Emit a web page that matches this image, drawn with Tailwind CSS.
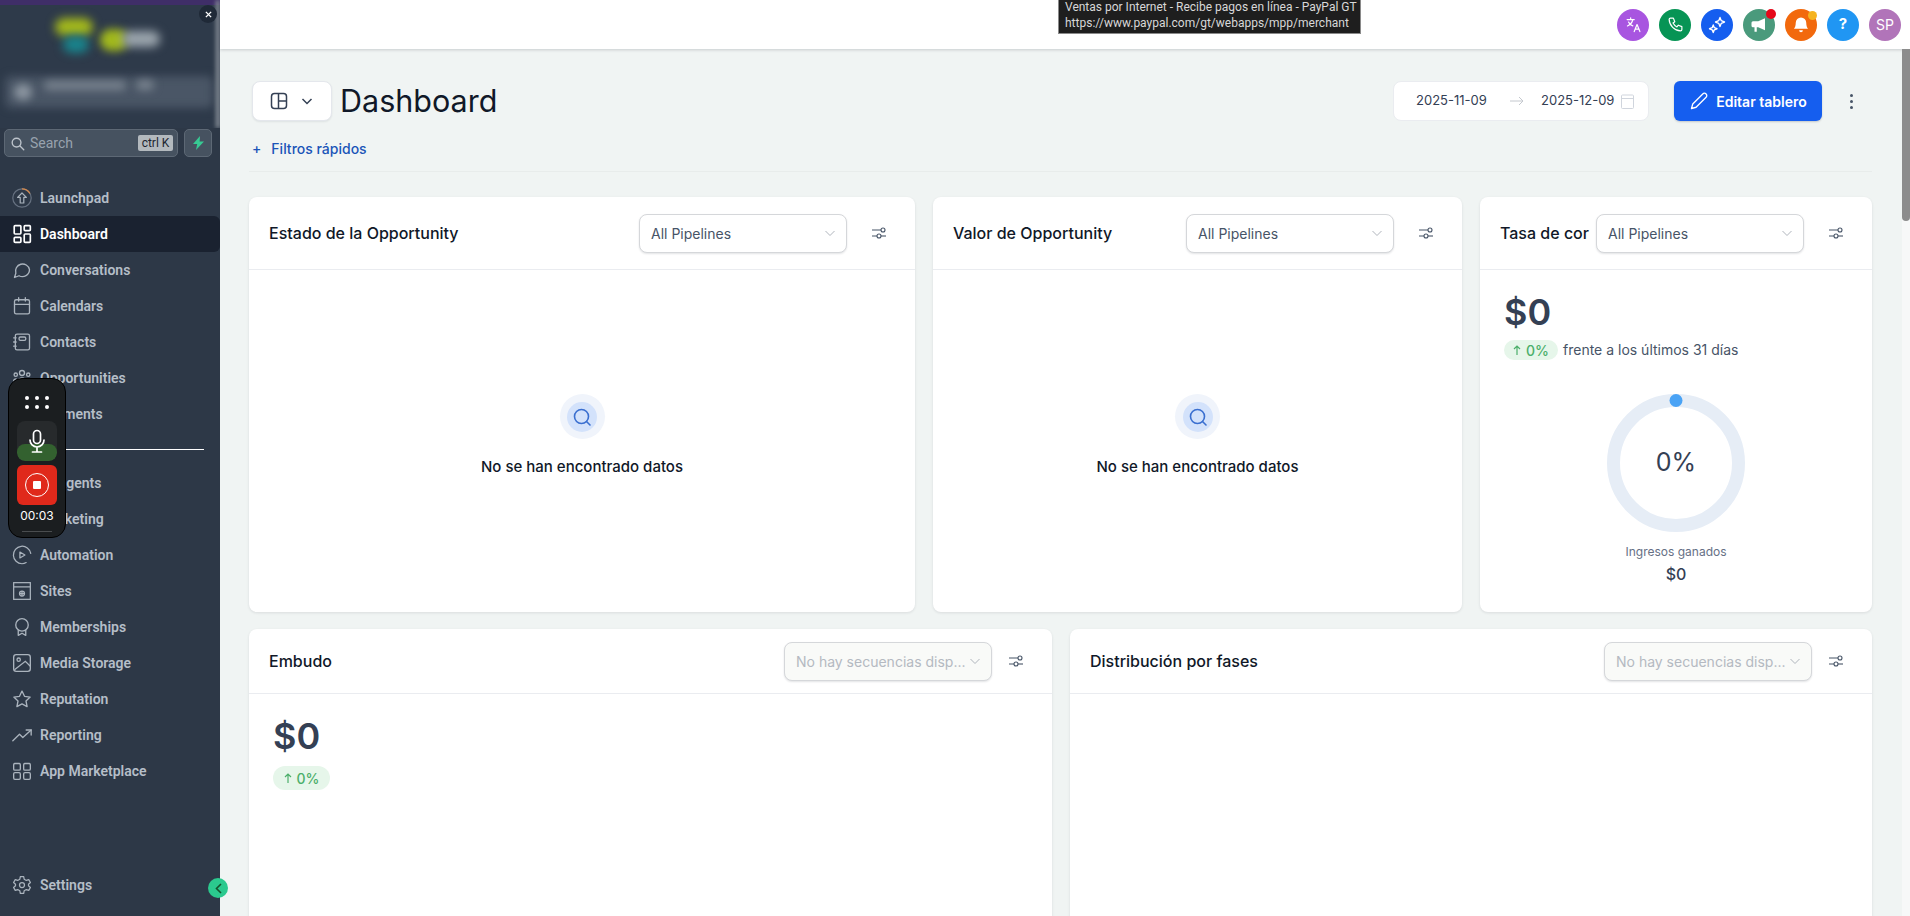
<!DOCTYPE html>
<html lang="es">
<head>
  <meta charset="UTF-8" />
  <title>Dashboard</title>
  <script src="https://cdn.jsdelivr.net/npm/@tailwindcss/browser@4"></script>
</head>
<body class="h-[916px] w-[1910px] overflow-hidden flex bg-[#f0f4f3] font-['Inter',sans-serif] text-[#101828]">

  <!-- sidebar -->
  <aside class="relative w-[220px] h-full shrink-0 flex flex-col bg-[#2d3847] font-['Roboto',sans-serif]">
    <div class="relative h-[128px] overflow-hidden bg-[#2e3a4a]">
      <div class="absolute inset-x-0 top-0 h-[5px] bg-[#3f2e68]"></div>
      <div class="absolute left-[55px] top-[18px] w-[38px] h-[18px] rounded-full bg-[#a3b81c] blur-[5px]"></div>
      <div class="absolute left-[63px] top-[36px] w-[26px] h-[17px] rounded-full bg-[#19838c] blur-[5px]"></div>
      <div class="absolute left-[100px] top-[29px] w-[28px] h-[22px] rounded-full bg-[#a2b91d] blur-[4px]"></div>
      <div class="absolute left-[122px] top-[31px] w-[38px] h-[16px] rounded-full bg-[#9ba5ad] blur-[5px]"></div>
      <div class="absolute left-[5px] top-[76px] w-[208px] h-[32px] rounded-md bg-[#4a5666] blur-[4px]"></div>
      <div class="absolute left-[14px] top-[84px] w-[18px] h-[16px] rounded-full bg-[#8b95a0] blur-[4px]"></div>
      <div class="absolute left-[44px] top-[81px] w-[82px] h-[9px] rounded-full bg-[#79838f] blur-[4px]"></div>
      <div class="absolute left-[136px] top-[80px] w-[18px] h-[10px] rounded-full bg-[#79838f] blur-[4px]"></div>
      <div class="absolute right-0 top-0 w-[4px] h-[128px] bg-[#8b939c] blur-[2px]"></div>
      <div class="absolute left-[199px] top-[5px] w-[18px] h-[18px] rounded-full bg-[#1f2937] flex items-center justify-center">
        <svg class="w-[7px] h-[7px]" viewBox="0 0 8 8" fill="none" stroke="#fff" stroke-width="1.6"><path d="M1 1l6 6M7 1L1 7"/></svg>
      </div>
    </div>

    <div class="flex gap-[6px] pl-[4px] pr-[8px] pt-[1px] h-[29px] box-content">
      <div class="flex-1 h-[28px] rounded-[5px] border border-[#5d6875] bg-[#465260] flex items-center pl-[5px] pr-[4px]">
        <svg class="w-[15px] h-[15px] shrink-0" viewBox="0 0 24 24" fill="none" stroke="#bcc3cb" stroke-width="2.2"><circle cx="10.5" cy="10.5" r="7"/><path d="M16 16l6 6" stroke-linecap="round"/></svg>
        <span class="ml-[5px] flex-1 text-[14px] text-[#98a2ae]">Search</span>
        <span class="h-[16px] w-[35px] rounded-[2px] bg-[#b3b9be] text-[#1d2631] text-[12px] leading-[16px] text-center">ctrl K</span>
      </div>
      <div class="w-[28px] h-[28px] rounded-[5px] border border-[#5d6875] bg-[#465260] flex items-center justify-center">
        <svg class="w-[13px] h-[14px]" viewBox="0 0 13 14" fill="#37ca93"><path d="M8 0L1 8h4.2L4 14l8-8.4H7.6z"/></svg>
      </div>
    </div>

    <nav class="pt-[22px] flex-1 flex flex-col text-[14px] font-semibold text-[#b5bec8]">
      <a class="h-9 flex items-center pl-[12px] gap-[8px] pr-2">
        <svg class="w-5 h-5 shrink-0" viewBox="0 0 20 20" fill="none" stroke="#aab3bd" stroke-width="1.2"><circle cx="10" cy="10" r="9.2" stroke="#667180"/><path d="M10 .8a9.2 9.2 0 0 1 8 4.7" stroke="#d98a4b"/><path d="M10 5l4.4 4.4h-2.6V15H8.2V9.4H5.6z" stroke-linejoin="round"/></svg>
        <span>Launchpad</span>
      </a>
      <a class="h-9 flex items-center pl-[12px] gap-[8px] pr-2 bg-[#1a2230] rounded-r-[6px] text-white">
        <svg class="w-5 h-5 shrink-0" viewBox="0 0 18 18" fill="none" stroke="#fff" stroke-width="1.5"><rect x="2" y="1.500" width="6" height="7.500" rx=".8"/><rect x="11" y="1.500" width="5.500" height="4.500" rx=".8"/><rect x="2" y="12" width="6" height="4.500" rx=".8"/><rect x="11" y="9" width="5.500" height="7.500" rx=".8"/></svg>
        <span>Dashboard</span>
      </a>
      <a class="h-9 flex items-center pl-[12px] gap-[8px] pr-2">
        <svg class="w-5 h-5 shrink-0" viewBox="0 0 24 24" fill="none" stroke="#aab3bd" stroke-width="1.600" stroke-linejoin="round"><path d="M21 11.500a8.500 8.500 0 0 1-12.600 7.400L3 21l1.600-5.100A8.500 8.500 0 1 1 21 11.500z"/></svg>
        <span>Conversations</span>
      </a>
      <a class="h-9 flex items-center pl-[12px] gap-[8px] pr-2">
        <svg class="w-5 h-5 shrink-0" viewBox="0 0 24 24" fill="none" stroke="#aab3bd" stroke-width="1.600" stroke-linecap="round"><rect x="3" y="4.500" width="18" height="17" rx="2"/><path d="M3 10h18M8 2v4M16 2v4"/></svg>
        <span>Calendars</span>
      </a>
      <a class="h-9 flex items-center pl-[12px] gap-[8px] pr-2">
        <svg class="w-5 h-5 shrink-0" viewBox="0 0 24 24" fill="none" stroke="#aab3bd" stroke-width="1.600" stroke-linecap="round"><rect x="4" y="2.500" width="17" height="19" rx="2"/><rect x="8.500" y="6" width="8" height="4" rx="1.500"/><path d="M2 7h3M2 12h3M2 17h3"/></svg>
        <span>Contacts</span>
      </a>
      <a class="h-9 flex items-center pl-[12px] gap-[8px] pr-2">
        <svg class="w-5 h-5 shrink-0" viewBox="0 0 24 24" fill="none" stroke="#aab3bd" stroke-width="1.600" stroke-linecap="round"><circle cx="12" cy="6" r="3"/><circle cx="4.500" cy="8" r="2"/><circle cx="19.500" cy="8" r="2"/><path d="M7 20v-3a5 5 0 0 1 10 0v3M2 18v-2a3 3 0 0 1 3-3M22 18v-2a3 3 0 0 0-3-3"/></svg>
        <span>Opportunities</span>
      </a>
      <a class="h-9 flex items-center pl-[12px] gap-[8px] pr-2">
        <svg class="w-5 h-5 shrink-0" viewBox="0 0 24 24" fill="none" stroke="#aab3bd" stroke-width="1.600"><rect x="2" y="5" width="20" height="14" rx="2"/><path d="M2 10h20"/></svg>
        <span>Payments</span>
      </a>
      <div class="ml-[16px] mr-[16px] mt-[17px] mb-[15px] h-px shrink-0 bg-white"></div>
      <a class="h-9 flex items-center pl-[12px] gap-[8px] pr-2">
        <svg class="w-5 h-5 shrink-0" viewBox="0 0 24 24" fill="none" stroke="#aab3bd" stroke-width="1.600"><rect x="4" y="7" width="16" height="13" rx="3"/><path d="M12 7V3"/></svg>
        <span>AI Agents</span>
      </a>
      <a class="h-9 flex items-center pl-[12px] gap-[8px] pr-2">
        <svg class="w-5 h-5 shrink-0" viewBox="0 0 24 24" fill="none" stroke="#aab3bd" stroke-width="1.600"><path d="M3 10v4l13 5V5z"/></svg>
        <span>Marketing</span>
      </a>
      <a class="h-9 flex items-center pl-[12px] gap-[8px] pr-2">
        <svg class="w-5 h-5 shrink-0" viewBox="0 0 24 24" fill="none" stroke="#aab3bd" stroke-width="1.500" stroke-linecap="round" stroke-linejoin="round"><path d="M22.500 10A10.500 10.500 0 1 0 12 22.500c2 0 3.500-.5 5-1.400"/><path d="M9.500 8.500v7l6-3.500z"/></svg>
        <span>Automation</span>
      </a>
      <a class="h-9 flex items-center pl-[12px] gap-[8px] pr-2">
        <svg class="w-5 h-5 shrink-0" viewBox="0 0 24 24" fill="none" stroke="#aab3bd" stroke-width="1.500"><rect x="2" y="2" width="20" height="20"/><path d="M2 7h20M9 15h6M12 12v6"/><circle cx="12" cy="15" r="3"/></svg>
        <span>Sites</span>
      </a>
      <a class="h-9 flex items-center pl-[12px] gap-[8px] pr-2">
        <svg class="w-5 h-5 shrink-0" viewBox="0 0 24 24" fill="none" stroke="#aab3bd" stroke-width="1.600" stroke-linejoin="round"><circle cx="12" cy="9.500" r="7.500"/><path d="M7.500 15.500V22l4.500-2.500 4.500 2.500v-6.500"/></svg>
        <span>Memberships</span>
      </a>
      <a class="h-9 flex items-center pl-[12px] gap-[8px] pr-2">
        <svg class="w-5 h-5 shrink-0" viewBox="0 0 24 24" fill="none" stroke="#aab3bd" stroke-width="1.600"><rect x="2" y="2" width="20" height="20" rx="3"/><circle cx="8" cy="8" r="2"/><path d="M3 20L16 10l6 6"/></svg>
        <span>Media Storage</span>
      </a>
      <a class="h-9 flex items-center pl-[12px] gap-[8px] pr-2">
        <svg class="w-5 h-5 shrink-0" viewBox="0 0 24 24" fill="none" stroke="#aab3bd" stroke-width="1.600" stroke-linejoin="round"><path d="M12 2.500l3 6.300 6.800.9-5 4.700 1.300 6.800-6.100-3.300-6.100 3.300 1.300-6.800-5-4.700 6.800-.9z"/></svg>
        <span>Reputation</span>
      </a>
      <a class="h-9 flex items-center pl-[12px] gap-[8px] pr-2">
        <svg class="w-5 h-5 shrink-0" viewBox="0 0 24 24" fill="none" stroke="#aab3bd" stroke-width="1.600" stroke-linecap="round" stroke-linejoin="round"><path d="M1 19l8-8 4 4 10-9"/><path d="M17 6h6v6"/></svg>
        <span>Reporting</span>
      </a>
      <a class="h-9 flex items-center pl-[12px] gap-[8px] pr-2">
        <svg class="w-5 h-5 shrink-0" viewBox="0 0 24 24" fill="none" stroke="#aab3bd" stroke-width="1.600"><rect x="2" y="3" width="8" height="8" rx="1.500"/><rect x="14" y="3" width="8" height="8" rx="1.500"/><rect x="2" y="14" width="8" height="8" rx="1.500"/><rect x="14" y="14" width="8" height="8" rx="1.500"/></svg>
        <span>App Marketplace</span>
      </a>
      <a class="mt-auto mb-[13px] h-9 flex items-center pl-[12px] gap-[8px] pr-2">
        <svg class="w-5 h-5 shrink-0" viewBox="0 0 24 24" fill="none" stroke="#aab3bd" stroke-width="1.500" stroke-linejoin="round"><circle cx="12" cy="12" r="3"/><path d="M10 2h4l.6 3 2.600 1.500 2.900-1 2 3.500-2.300 2v2l2.300 2-2 3.500-2.900-1-2.600 1.500-.6 3h-4l-.6-3-2.600-1.500-2.900 1-2-3.500 2.300-2v-2l-2.300-2 2-3.500 2.900 1L9.400 5z"/></svg>
        <span>Settings</span>
      </a>
    </nav>

    <!-- collapse toggle -->
    <div class="absolute left-[208px] top-[878px] w-[20px] h-[20px] rounded-full bg-[#2bc98e] flex items-center justify-center z-10">
      <svg class="w-[9px] h-[11px]" viewBox="0 0 9 11" fill="none" stroke="#14532d" stroke-width="1.600"><path d="M7 1L2.500 5.500 7 10"/></svg>
    </div>

    <!-- screen recorder widget -->
    <div class="absolute left-[8px] top-[378px] w-[58px] h-[160px] rounded-[14px] bg-[#1b1e20] border border-black flex flex-col items-center z-20">
      <div class="grid grid-cols-3 gap-x-[6px] gap-y-[5px] mt-[17px]">
        <i class="block w-[4px] h-[4px] rounded-full bg-white"></i><i class="block w-[4px] h-[4px] rounded-full bg-white"></i><i class="block w-[4px] h-[4px] rounded-full bg-white"></i>
        <i class="block w-[4px] h-[4px] rounded-full bg-white"></i><i class="block w-[4px] h-[4px] rounded-full bg-white"></i><i class="block w-[4px] h-[4px] rounded-full bg-white"></i>
      </div>
      <div class="relative mt-[12px] w-[40px] h-[40px] rounded-[8px] overflow-hidden bg-[#272a2c] flex items-center justify-center">
        <div class="absolute inset-x-0 bottom-0 h-[17px] rounded-[8px] bg-[#33612f]"></div>
        <svg class="relative w-[20px] h-[25px]" viewBox="0 0 20 24" fill="none" stroke="#fff" stroke-width="1.700" stroke-linecap="round"><rect x="6.500" y="1" width="7" height="13" rx="3.500"/><path d="M3 10.500a7 7 0 0 0 14 0M10 18v4M5.500 22.500h9"/></svg>
      </div>
      <div class="mt-[4px] w-[40px] h-[40px] rounded-[6px] bg-[#e0291b] flex items-center justify-center">
        <div class="w-[24px] h-[24px] rounded-full border-[1.500px] border-white flex items-center justify-center">
          <div class="w-[8px] h-[8px] rounded-[1px] bg-white"></div>
        </div>
      </div>
      <div class="mt-[3px] text-[12px] leading-[16px] text-white font-['Inter',sans-serif]">00:03</div>
      <div class="mt-[7px] w-[30px] h-px bg-[#4a4d4f]"></div>
    </div>
  </aside>

  <!-- main column -->
  <div class="relative flex-1 min-w-0 h-full flex flex-col">
    <header class="h-[49px] shrink-0 bg-white shadow-[0_1px_3px_rgba(16,24,40,0.18)] flex items-center justify-end gap-[10px] pr-[9px] z-10">
      <span class="w-[32px] h-[32px] rounded-full bg-[#a855e0] flex items-center justify-center">
        <svg class="w-[17px] h-[17px]" viewBox="0 0 24 24" fill="none" stroke="#fff" stroke-width="1.700" stroke-linecap="round" stroke-linejoin="round"><path d="M3 5h10M8 2.500V5M11 5c-.7 4-3.500 7-7.500 9M5 8.500c1 2.500 3 4.500 6 5.500M13 22l4-10 4 10M14.500 18.500h5"/></svg>
      </span>
      <span class="w-[32px] h-[32px] rounded-full bg-[#079455] flex items-center justify-center">
        <svg class="w-[17px] h-[17px]" viewBox="0 0 24 24" fill="none" stroke="#fff" stroke-width="1.700" stroke-linejoin="round"><path d="M5 3h4l2 5-2.500 2a13 13 0 0 0 5.500 5.500L16 13l5 2v4a2 2 0 0 1-2 2C10.500 20.500 3.500 13.500 3 5a2 2 0 0 1 2-2z"/></svg>
      </span>
      <span class="w-[32px] h-[32px] rounded-full bg-[#155eef] flex items-center justify-center">
        <svg class="w-[18px] h-[18px]" viewBox="0 0 24 24" fill="none" stroke="#fff" stroke-width="1.800" stroke-linejoin="round"><path d="M16 2l1.700 4.300L22 8l-4.300 1.700L16 14l-1.700-4.300L10 8l4.300-1.700zM7 12l1.400 3.600L12 17l-3.600 1.400L7 22l-1.400-3.600L2 17l3.600-1.400z"/></svg>
      </span>
      <span class="relative w-[32px] h-[32px] rounded-full bg-[#4a9a7c] flex items-center justify-center">
        <svg class="w-[18px] h-[18px]" viewBox="0 0 24 24" fill="#fff"><path d="M20 3v16l-9-4H9v6H6v-6H4a2 2 0 0 1-2-2V9a2 2 0 0 1 2-2h7z"/></svg>
        <i class="absolute right-[-1px] top-[0px] w-[10px] h-[10px] rounded-full bg-[#e5091a]"></i>
      </span>
      <span class="relative w-[32px] h-[32px] rounded-full bg-[#f2690d] flex items-center justify-center">
        <svg class="w-[18px] h-[18px]" viewBox="0 0 24 24" fill="#fff"><path d="M12 2a7 7 0 0 0-7 7c0 6-2.500 8-2.500 8h19S19 15 19 9a7 7 0 0 0-7-7zM9.500 19a2.500 2.500 0 0 0 5 0z"/></svg>
        <i class="absolute right-[0px] top-[2px] w-[9px] h-[9px] rounded-full bg-[#f5b31f]"></i>
      </span>
      <span class="w-[32px] h-[32px] rounded-full bg-[#2096f3] flex items-center justify-center text-white text-[15px] font-bold">?</span>
      <span class="w-[32px] h-[32px] rounded-full bg-[#b174b9] flex items-center justify-center text-white text-[14px]">SP</span>
    </header>

    <div class="absolute left-[838px] top-0 w-[303px] h-[34px] bg-[#1e1e1e] border-b border-x border-[#8a8a8a] pl-[6px] text-[12px] leading-[16px] text-[#d8d8d8] font-['Roboto',sans-serif] whitespace-nowrap z-20">
      <div class="-mt-[1px]">Ventas por Internet - Recibe pagos en línea - PayPal GT</div>
      <div>https://www.paypal.com/gt/webapps/mpp/merchant</div>
    </div>

    <!-- scrollbar -->
    <div class="absolute right-0 top-[49px] bottom-0 w-[8px] bg-[#f7f8f8] z-10">
      <div class="h-[172px] rounded-b-[4px] bg-[#8c8c8c]"></div>
    </div>

    <main class="flex-1 min-h-0 overflow-hidden pl-[29px] pr-[38px]">
      <div class="pl-[3px] pr-[18px] pt-[32px] border-b border-[#e8eceb] h-[123px]">
        <div class="flex items-center">
          <div class="w-[80px] h-[40px] rounded-[8px] bg-white border border-[#e4e7ec] shadow-[0_1px_2px_rgba(16,24,40,0.08)] flex items-center justify-center gap-[12px]">
            <svg class="w-[18px] h-[18px]" viewBox="0 0 18 18" fill="none" stroke="#344054" stroke-width="1.500"><rect x="1.500" y="1.500" width="15" height="15" rx="3"/><path d="M8.500 1.500v15M8.500 9h8"/></svg>
            <svg class="w-[14px] h-[14px]" viewBox="0 0 14 14" fill="none" stroke="#344054" stroke-width="1.500"><path d="M2.500 5l4.500 4.500L11.500 5"/></svg>
          </div>
          <h1 class="ml-[8px] text-[30.500px] leading-[40px] font-normal text-[#101828]">Dashboard</h1>
          <div class="ml-auto w-[256px] h-[40px] rounded-[8px] bg-white border border-[#eaecf0] flex items-center text-[13px] text-[#344054] pl-[22px] whitespace-nowrap">
            <span class="w-[71px]">2025-11-09</span>
            <svg class="w-[14px] h-[10px] ml-[23px]" viewBox="0 0 14 10" fill="none" stroke="#c4c8ce" stroke-width="1"><path d="M0 5h13M9 1l4 4-4 4"/></svg>
            <span class="w-[71px] ml-[17px]">2025-12-09</span>
            <svg class="w-[13px] h-[15px] ml-[9px]" viewBox="0 0 13 15" fill="none" stroke="#d0d5dd" stroke-width="1"><rect x=".5" y="1" width="12" height="13.500" rx="1"/><path d="M.5 4.500h12"/></svg>
          </div>
          <button class="ml-[25px] w-[148px] h-[40px] rounded-[6px] bg-[#155eef] text-white text-[14px] font-semibold flex items-center justify-center gap-[7px] shadow-[0_1px_2px_rgba(16,24,40,0.2)]">
            <svg class="w-[20px] h-[20px]" viewBox="0 0 24 24" fill="none" stroke="#fff" stroke-width="1.600" stroke-linejoin="round"><path d="M3 21l1.500-5.500L16.500 3.500a2.500 2.500 0 0 1 4 4L8.500 19.500z"/></svg>
            Editar tablero
          </button>
          <div class="ml-[28px] w-[4px] flex flex-col gap-[3px]">
            <i class="block w-[3px] h-[3px] rounded-full bg-[#475467]"></i><i class="block w-[3px] h-[3px] rounded-full bg-[#475467]"></i><i class="block w-[3px] h-[3px] rounded-full bg-[#475467]"></i>
          </div>
        </div>
        <div class="mt-[17px] flex items-center gap-[10px] text-[14px] font-medium text-[#1b55b8]">
          <span class="text-[14px] leading-none">+</span><span>Filtros rápidos</span>
        </div>
      </div>

      <div class="grid grid-cols-[666px_529px_392px] gap-[18px] mt-[25px]">
        <section class="h-[415px] rounded-[8px] bg-white shadow-[0_1px_3px_rgba(16,24,40,0.1)] flex flex-col">
          <div class="h-[73px] shrink-0 border-b border-[#eaecf0] flex items-center pl-[20px] pr-[29px]">
            <h2 class="flex-1 text-[16px] font-medium">Estado de la Opportunity</h2>
            <div class="w-[208px] h-[39px] rounded-[8px] bg-white border border-[#d5d7da] shadow-[0_1px_2px_rgba(16,24,40,0.12)] flex items-center justify-between pl-[11px] pr-[10px] text-[14px] text-[#475467]">
              <span>All Pipelines</span>
              <svg class="w-[12px] h-[12px]" viewBox="0 0 12 12" fill="none" stroke="#b0b5bd" stroke-width="1"><path d="M1.500 4l4.500 4.500L10.500 4"/></svg>
            </div>
            <svg class="ml-[25px] w-[14px] h-[12px]" viewBox="0 0 14 12" fill="none" stroke="#475467" stroke-width="1.100"><path d="M0 3h9M0 9h5"/><circle cx="11" cy="3" r="2"/><circle cx="7" cy="9" r="2"/><path d="M9 9h5"/></svg>
          </div>
          <div class="flex-1 flex flex-col items-center pt-[124px]">
            <div class="w-[45px] h-[45px] rounded-full bg-[#f0f4fb] flex items-center justify-center">
              <div class="w-[30px] h-[30px] rounded-full bg-[#d3e2fb] flex items-center justify-center">
                <svg class="w-[20px] h-[20px]" viewBox="0 0 20 20" fill="none" stroke="#3a6fd0" stroke-width="1.600" stroke-linecap="round"><circle cx="9.500" cy="9.500" r="7"/><path d="M14.500 14.500l3.500 3.500"/></svg>
              </div>
            </div>
            <p class="mt-[18px] text-[15px] leading-[20px] font-medium">No se han encontrado datos</p>
          </div>
        </section>

        <section class="h-[415px] rounded-[8px] bg-white shadow-[0_1px_3px_rgba(16,24,40,0.1)] flex flex-col">
          <div class="h-[73px] shrink-0 border-b border-[#eaecf0] flex items-center pl-[20px] pr-[29px]">
            <h2 class="flex-1 text-[16px] font-medium">Valor de Opportunity</h2>
            <div class="w-[208px] h-[39px] rounded-[8px] bg-white border border-[#d5d7da] shadow-[0_1px_2px_rgba(16,24,40,0.12)] flex items-center justify-between pl-[11px] pr-[10px] text-[14px] text-[#475467]">
              <span>All Pipelines</span>
              <svg class="w-[12px] h-[12px]" viewBox="0 0 12 12" fill="none" stroke="#b0b5bd" stroke-width="1"><path d="M1.500 4l4.500 4.500L10.500 4"/></svg>
            </div>
            <svg class="ml-[25px] w-[14px] h-[12px]" viewBox="0 0 14 12" fill="none" stroke="#475467" stroke-width="1.100"><path d="M0 3h9M0 9h5"/><circle cx="11" cy="3" r="2"/><circle cx="7" cy="9" r="2"/><path d="M9 9h5"/></svg>
          </div>
          <div class="flex-1 flex flex-col items-center pt-[124px]">
            <div class="w-[45px] h-[45px] rounded-full bg-[#f0f4fb] flex items-center justify-center">
              <div class="w-[30px] h-[30px] rounded-full bg-[#d3e2fb] flex items-center justify-center">
                <svg class="w-[20px] h-[20px]" viewBox="0 0 20 20" fill="none" stroke="#3a6fd0" stroke-width="1.600" stroke-linecap="round"><circle cx="9.500" cy="9.500" r="7"/><path d="M14.500 14.500l3.500 3.500"/></svg>
              </div>
            </div>
            <p class="mt-[18px] text-[15px] leading-[20px] font-medium">No se han encontrado datos</p>
          </div>
        </section>

        <section class="h-[415px] rounded-[8px] bg-white shadow-[0_1px_3px_rgba(16,24,40,0.1)] flex flex-col">
          <div class="h-[73px] shrink-0 border-b border-[#eaecf0] flex items-center pl-[20px] pr-[29px]">
            <h2 class="w-[96px] shrink-0 whitespace-nowrap text-[16px] font-medium">Tasa de cor</h2>
            <div class="w-[208px] h-[39px] rounded-[8px] bg-white border border-[#d5d7da] shadow-[0_1px_2px_rgba(16,24,40,0.12)] flex items-center justify-between pl-[11px] pr-[10px] text-[14px] text-[#475467]">
              <span>All Pipelines</span>
              <svg class="w-[12px] h-[12px]" viewBox="0 0 12 12" fill="none" stroke="#b0b5bd" stroke-width="1"><path d="M1.500 4l4.500 4.500L10.500 4"/></svg>
            </div>
            <svg class="ml-[25px] w-[14px] h-[12px]" viewBox="0 0 14 12" fill="none" stroke="#475467" stroke-width="1.100"><path d="M0 3h9M0 9h5"/><circle cx="11" cy="3" r="2"/><circle cx="7" cy="9" r="2"/><path d="M9 9h5"/></svg>
          </div>
          <div class="flex-1 flex flex-col px-[24px]">
            <div class="mt-[20px] text-[36px] leading-[44px] font-semibold text-[#344054]">$0</div>
            <div class="mt-[6px] flex items-center">
              <span class="w-[54px] h-[20px] rounded-full bg-[#e6f6ea] flex items-center justify-center gap-[5px] text-[14px] font-medium text-[#4caf6a]">
                <svg class="w-[8px] h-[10px]" viewBox="0 0 8 10" fill="none" stroke="#4caf6a" stroke-width="1.200"><path d="M4 10V1M1 4l3-3 3 3"/></svg>0%
              </span>
              <span class="ml-[5px] -mt-[2px] text-[14px] text-[#475467]">frente a los últimos 31 días</span>
            </div>
            <div class="relative mt-[34px] self-center w-[138px] h-[138px]">
              <svg class="w-[138px] h-[138px]" viewBox="0 0 138 138" fill="none"><circle cx="69" cy="69" r="62.500" stroke="#e6edf6" stroke-width="13"/><circle cx="69" cy="6.500" r="6.500" fill="#4aa3f5"/></svg>
              <div class="absolute inset-0 flex items-center justify-center text-[25px] text-[#344054]">0%</div>
            </div>
            <div class="mt-[11px] text-center text-[12px] leading-[18px] text-[#667085]">Ingresos ganados</div>
            <div class="mt-[1px] text-center text-[16px] leading-[24px] font-medium text-[#344054]">$0</div>
          </div>
        </section>
      </div>

      <div class="grid grid-cols-[803px_802px] gap-[18px] mt-[17px]">
        <section class="h-[400px] rounded-[8px] bg-white shadow-[0_1px_3px_rgba(16,24,40,0.1)]">
          <div class="h-[65px] border-b border-[#eaecf0] flex items-center pl-[20px] pr-[29px]">
            <h2 class="flex-1 text-[16px] font-medium">Embudo</h2>
            <div class="w-[208px] h-[39px] rounded-[8px] bg-[#f9faf8] border border-[#d5d7da] shadow-[0_1px_2px_rgba(16,24,40,0.12)] flex items-center justify-between pl-[11px] pr-[10px] text-[14px] text-[#b4b9c1]">
              <span>No hay secuencias disp...</span>
              <svg class="w-[12px] h-[12px]" viewBox="0 0 12 12" fill="none" stroke="#b0b5bd" stroke-width="1"><path d="M1.500 4l4.500 4.500L10.500 4"/></svg>
            </div>
            <svg class="ml-[17px] w-[14px] h-[12px]" viewBox="0 0 14 12" fill="none" stroke="#475467" stroke-width="1.100"><path d="M0 3h9M0 9h5"/><circle cx="11" cy="3" r="2"/><circle cx="7" cy="9" r="2"/><path d="M9 9h5"/></svg>
          </div>
          <div class="px-[24px]">
            <div class="mt-[20px] text-[36px] leading-[44px] font-semibold text-[#344054]">$0</div>
            <span class="mt-[8px] w-[57px] h-[24px] rounded-full bg-[#e6f6ea] flex items-center justify-center gap-[5px] text-[14px] font-medium text-[#4caf6a]">
              <svg class="w-[8px] h-[10px]" viewBox="0 0 8 10" fill="none" stroke="#4caf6a" stroke-width="1.200"><path d="M4 10V1M1 4l3-3 3 3"/></svg>0%
            </span>
          </div>
        </section>
        <section class="h-[400px] rounded-[8px] bg-white shadow-[0_1px_3px_rgba(16,24,40,0.1)]">
          <div class="h-[65px] border-b border-[#eaecf0] flex items-center pl-[20px] pr-[29px]">
            <h2 class="flex-1 text-[16px] font-medium">Distribución por fases</h2>
            <div class="w-[208px] h-[39px] rounded-[8px] bg-[#f9faf8] border border-[#d5d7da] shadow-[0_1px_2px_rgba(16,24,40,0.12)] flex items-center justify-between pl-[11px] pr-[10px] text-[14px] text-[#b4b9c1]">
              <span>No hay secuencias disp...</span>
              <svg class="w-[12px] h-[12px]" viewBox="0 0 12 12" fill="none" stroke="#b0b5bd" stroke-width="1"><path d="M1.500 4l4.500 4.500L10.500 4"/></svg>
            </div>
            <svg class="ml-[17px] w-[14px] h-[12px]" viewBox="0 0 14 12" fill="none" stroke="#475467" stroke-width="1.100"><path d="M0 3h9M0 9h5"/><circle cx="11" cy="3" r="2"/><circle cx="7" cy="9" r="2"/><path d="M9 9h5"/></svg>
          </div>
        </section>
      </div>
    </main>
  </div>
</body>
</html>
